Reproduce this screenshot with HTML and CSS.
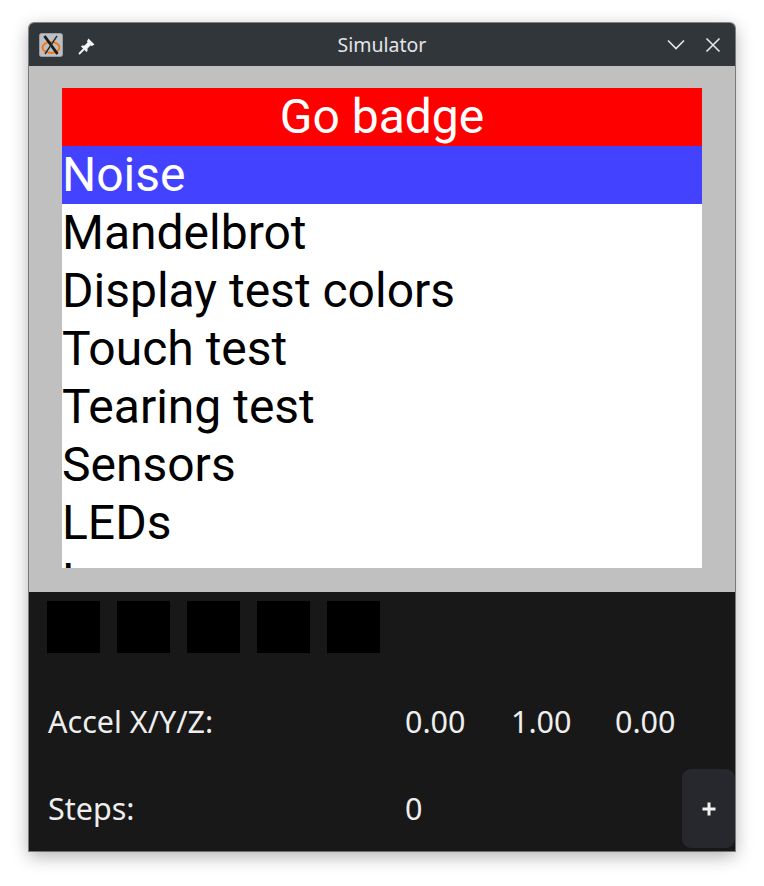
FILE: index.html
```html
<!DOCTYPE html>
<html>
<head>
<meta charset="utf-8">
<link rel="stylesheet" href="styles.css">
</head>
<body>
<div class="window">
  <div class="titlebar">
    <div class="tb-left">
      <svg class="appicon" width="24" height="24" viewBox="0 0 24 24">
        <rect x="0.5" y="0.5" width="23" height="23" rx="2" fill="#bcc0c4" stroke="#9a9ea2"/>
        <ellipse cx="12" cy="14.5" rx="8.5" ry="5.5" fill="none" stroke="#f07a1a" stroke-width="2"/>
        <path d="M5.5 3 L18.5 21" stroke="#1a1a1a" stroke-width="2.8"/>
        <path d="M18 3 L6 21" stroke="#2a2a2a" stroke-width="1.4"/>
      </svg>
      <svg class="pin" width="18" height="18" viewBox="0 0 18 18">
        <path d="M10.5 1.5 L16.5 7.5 L14 9 L12.5 8.5 L9.5 11.5 L9.5 14 L8.5 15 L3 9.5 L4 8.5 L6.5 8.5 L9.5 5.5 L9 4 Z" fill="#f4f4f4"/>
        <path d="M6 12 L1.5 16.5" stroke="#f4f4f4" stroke-width="1.8" stroke-linecap="round"/>
      </svg>
    </div>
    <div class="title">Simulator</div>
    <div class="tb-right">
      <svg width="18" height="12" viewBox="0 0 18 12"><path d="M1 1.5 L9 9.5 L17 1.5" fill="none" stroke="#e6e8ea" stroke-width="1.6"/></svg>
      <svg width="16" height="16" viewBox="0 0 16 16"><path d="M1.5 1.5 L14.5 14.5 M14.5 1.5 L1.5 14.5" fill="none" stroke="#e6e8ea" stroke-width="1.6"/></svg>
    </div>
  </div>
  <div class="screen-area">
    <div class="display">
      <div class="header">Go badge</div>
      <div class="item selected">Noise</div>
      <div class="item">Mandelbrot</div>
      <div class="item">Display test colors</div>
      <div class="item">Touch test</div>
      <div class="item">Tearing test</div>
      <div class="item">Sensors</div>
      <div class="item">LEDs</div>
      <div class="item">Lua</div>
    </div>
  </div>
  <div class="panel">
    <div class="leds">
      <div class="led"></div>
      <div class="led"></div>
      <div class="led"></div>
      <div class="led"></div>
      <div class="led"></div>
    </div>
    <div class="grid">
      <div class="cell">Accel X/Y/Z:</div>
      <div class="cell">0.00</div>
      <div class="cell">1.00</div>
      <div class="cell">0.00</div>
      <div class="cell">Steps:</div>
      <div class="cell">0</div>
      <div class="cell"></div>
      <div class="cell btn-cell"><div class="plus-btn"><svg width="14" height="14" viewBox="0 0 14 14"><path d="M7 0.5 V13.5 M0.5 7 H13.5" stroke="#f2f2f2" stroke-width="3"/></svg></div></div>
    </div>
  </div>
</div>
</body>
</html>
```

FILE: styles.css
```css
html, body {
  margin: 0;
  padding: 0;
  background: #ffffff;
}
body {
  padding: 23px 29px 0 29px;
  width: 706px;
  height: 863px;
}
.window {
  width: 706px;
  height: 828px;
  display: flex;
  flex-direction: column;
  border-radius: 5px 5px 0 0;
  overflow: hidden;
  box-shadow: 0 5px 18px rgba(0,0,0,0.32), 0 0 0 1px rgba(70,70,70,0.6);
  font-family: "Noto Sans", sans-serif;
}
.titlebar {
  height: 43px;
  background: #31363b;
  display: flex;
  align-items: center;
  position: relative;
  flex: none;
}
.tb-left {
  display: flex;
  align-items: center;
  gap: 15px;
  padding-left: 10px;
}
.appicon { display: block; }
.pin { display: block; margin-top: 2px; }
.title {
  position: absolute;
  left: 0;
  right: 0;
  text-align: center;
  color: #e3e5e7;
  font-size: 19.5px;
  line-height: 43px;
  pointer-events: none;
}
.tb-right {
  margin-left: auto;
  display: flex;
  align-items: center;
  gap: 20px;
  padding-right: 14px;
  position: relative;
}
.tb-right svg { display: block; }
.screen-area {
  background: #c0c0c0;
  padding: 22px 33px 24px 33px;
  flex: none;
}
.display {
  width: 640px;
  height: 480px;
  background: #ffffff;
  overflow: hidden;
  font-family: Roboto, sans-serif;
  font-size: 48px;
  line-height: 58px;
}
.header {
  height: 58px;
  background: #ff0000;
  color: #ffffff;
  text-align: center;
}
.item {
  height: 58px;
  color: #000000;
  white-space: nowrap;
  padding-left: 0;
}
.item.selected {
  background: #4343ff;
  color: #ffffff;
}
.panel {
  flex: 1;
  background: #181818;
  padding: 9px 0 0 18px;
  display: flex;
  flex-direction: column;
}
.leds {
  display: flex;
  gap: 17px;
}
.led {
  width: 53px;
  height: 52px;
  background: #000000;
}
.grid {
  margin-top: 29px;
  margin-left: 1px;
  display: grid;
  grid-template-columns: 357px 106px 104px 1fr;
  grid-auto-rows: 79px;
  row-gap: 8px;
  color: #eeeeee;
  font-size: 30.5px;
  line-height: 79px;
}
.cell { white-space: nowrap; }
.btn-cell {
  display: flex;
  justify-content: flex-end;
}
.plus-btn {
  width: 53px;
  height: 79px;
  background: #27282d;
  border-radius: 9px;
  display: flex;
  align-items: center;
  justify-content: center;
}
.plus-btn svg { display: block; }
```
